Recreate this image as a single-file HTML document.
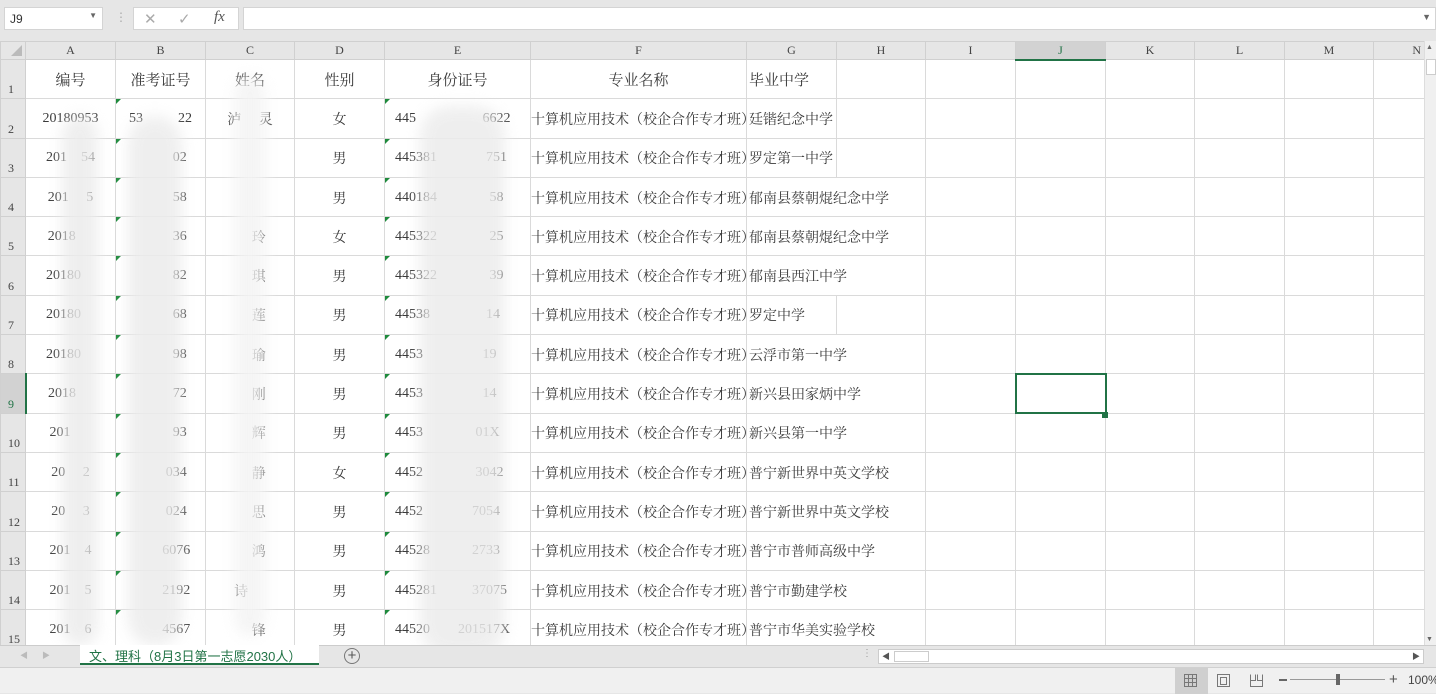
<!DOCTYPE html>
<html><head><meta charset="utf-8"><style>
*{margin:0;padding:0;box-sizing:border-box}
body{width:1436px;height:693px;overflow:hidden;background:#e6e6e6;font-family:"Liberation Serif","Noto Serif CJK SC",serif;position:relative}
.abs{position:absolute}
#grid{position:absolute;left:0;top:41px;width:1424px;height:604px;overflow:hidden;background:#fff}
table{border-collapse:collapse;table-layout:fixed;width:1424px}
td{border:1px solid #dadada;height:39.3px;font-size:14px;color:#3a3a3a;white-space:nowrap;overflow:visible;text-align:center;padding:1px 0 0 0}
tr.hd td{height:18px;background:#e6e6e6;border-color:#d0d0d0;font-size:12px;color:#444;padding:0}
td.rh{background:#e6e6e6;border-color:#d0d0d0;font-size:12px;color:#444;text-align:left;padding-left:7px;vertical-align:bottom;padding-bottom:1px}
td.l{text-align:left;padding-left:2px}
td.ov{border-right:hidden}
td.tri{position:relative}
td.tri::before{content:"";position:absolute;left:0;top:0;border-top:5px solid #1e8a3c;border-right:5px solid transparent}
.blob{position:absolute;background:#ececec;opacity:.85;filter:blur(7px);border-radius:30px}
</style></head><body>
<div class="abs" style="left:4px;top:7px;width:99px;height:23px;background:#fff;border:1px solid #d4d4d4;font:12px 'Liberation Sans',sans-serif;color:#333;padding:4px 5px">J9<span style="position:absolute;right:5px;top:3px;font-size:8px;color:#666">▼</span></div>
<div class="abs" style="left:115px;top:10px;color:#aaa;font-size:12px">⋮</div>
<div class="abs" style="left:133px;top:7px;width:106px;height:23px;background:#fff;border:1px solid #d4d4d4;font:15px 'Liberation Sans',sans-serif;color:#aaa"><span class="abs" style="left:10px;top:2px">✕</span><span class="abs" style="left:44px;top:2px">✓</span><span class="abs" style="left:80px;top:1px;color:#555;font:italic 15px 'Liberation Serif',serif">fx</span></div>
<div class="abs" style="left:243px;top:7px;width:1193px;height:23px;background:#fff;border:1px solid #d4d4d4"><span class="abs" style="right:4px;top:4px;font-size:9px;color:#666">▼</span></div>
<div id="grid"><table>
<colgroup><col style="width:25px"><col style="width:90px"><col style="width:90px"><col style="width:89px"><col style="width:90px"><col style="width:146px"><col style="width:216px"><col style="width:90px"><col style="width:89px"><col style="width:90px"><col style="width:90px"><col style="width:89px"><col style="width:90px"><col style="width:89px"><col style="width:51px"></colgroup>
<tr class="hd"><td style="position:relative"><span style="position:absolute;right:3px;bottom:3px;border-left:11px solid transparent;border-bottom:11px solid #bbb"></span></td><td>A</td><td>B</td><td>C</td><td>D</td><td>E</td><td>F</td><td>G</td><td>H</td><td>I</td><td style="background:#d2d2d2;border-bottom:2px solid #217346;color:#217346">J</td><td>K</td><td>L</td><td>M</td><td style="text-align:right;padding-right:3px">N</td></tr>
<tr><td class="rh" style="height:39px">1</td><td style="font-size:15px">编号</td><td style="font-size:15px">准考证号</td><td style="font-size:15px">姓名</td><td style="font-size:15px">性别</td><td style="font-size:15px">身份证号</td><td style="font-size:15px">专业名称</td><td class="l" style="font-size:15px">毕业中学</td><td></td><td></td><td></td><td></td><td></td><td></td><td></td></tr>
<tr><td class="rh">2</td><td>20180953</td><td class="tri">53&nbsp;&nbsp;&nbsp;&nbsp;&nbsp;&nbsp;&nbsp;&nbsp;&nbsp;&nbsp;22</td><td>泸&nbsp;&nbsp;&nbsp;&nbsp;&nbsp;灵</td><td>女</td><td class="tri l" style="padding-left:10px">445&nbsp;&nbsp;&nbsp;&nbsp;&nbsp;&nbsp;&nbsp;&nbsp;&nbsp;&nbsp;&nbsp;&nbsp;&nbsp;&nbsp;&nbsp;&nbsp;&nbsp;&nbsp;&nbsp;6622</td><td class="l" style="padding-left:0">十算机应用技术（校企合作专才班）</td><td class="l">廷锴纪念中学</td><td></td><td></td><td></td><td></td><td></td><td></td><td></td></tr>
<tr><td class="rh">3</td><td>201&nbsp;&nbsp;&nbsp;&nbsp;54</td><td class="tri">&nbsp;&nbsp;&nbsp;&nbsp;&nbsp;&nbsp;&nbsp;&nbsp;&nbsp;&nbsp;&nbsp;02</td><td></td><td>男</td><td class="tri l" style="padding-left:10px">445381&nbsp;&nbsp;&nbsp;&nbsp;&nbsp;&nbsp;&nbsp;&nbsp;&nbsp;&nbsp;&nbsp;&nbsp;&nbsp;&nbsp;751</td><td class="l" style="padding-left:0">十算机应用技术（校企合作专才班）</td><td class="l">罗定第一中学</td><td></td><td></td><td></td><td></td><td></td><td></td><td></td></tr>
<tr><td class="rh">4</td><td>201&nbsp;&nbsp;&nbsp;&nbsp;&nbsp;5</td><td class="tri">&nbsp;&nbsp;&nbsp;&nbsp;&nbsp;&nbsp;&nbsp;&nbsp;&nbsp;&nbsp;&nbsp;58</td><td></td><td>男</td><td class="tri l" style="padding-left:10px">440184&nbsp;&nbsp;&nbsp;&nbsp;&nbsp;&nbsp;&nbsp;&nbsp;&nbsp;&nbsp;&nbsp;&nbsp;&nbsp;&nbsp;&nbsp;58</td><td class="l" style="padding-left:0">十算机应用技术（校企合作专才班）</td><td class="l ov">郁南县蔡朝焜纪念中学</td><td></td><td></td><td></td><td></td><td></td><td></td><td></td></tr>
<tr><td class="rh">5</td><td>2018&nbsp;&nbsp;&nbsp;&nbsp;&nbsp;</td><td class="tri">&nbsp;&nbsp;&nbsp;&nbsp;&nbsp;&nbsp;&nbsp;&nbsp;&nbsp;&nbsp;&nbsp;36</td><td>&nbsp;&nbsp;&nbsp;&nbsp;&nbsp;玲</td><td>女</td><td class="tri l" style="padding-left:10px">445322&nbsp;&nbsp;&nbsp;&nbsp;&nbsp;&nbsp;&nbsp;&nbsp;&nbsp;&nbsp;&nbsp;&nbsp;&nbsp;&nbsp;&nbsp;25</td><td class="l" style="padding-left:0">十算机应用技术（校企合作专才班）</td><td class="l ov">郁南县蔡朝焜纪念中学</td><td></td><td></td><td></td><td></td><td></td><td></td><td></td></tr>
<tr><td class="rh">6</td><td>20180&nbsp;&nbsp;&nbsp;&nbsp;</td><td class="tri">&nbsp;&nbsp;&nbsp;&nbsp;&nbsp;&nbsp;&nbsp;&nbsp;&nbsp;&nbsp;&nbsp;82</td><td>&nbsp;&nbsp;&nbsp;&nbsp;&nbsp;琪</td><td>男</td><td class="tri l" style="padding-left:10px">445322&nbsp;&nbsp;&nbsp;&nbsp;&nbsp;&nbsp;&nbsp;&nbsp;&nbsp;&nbsp;&nbsp;&nbsp;&nbsp;&nbsp;&nbsp;39</td><td class="l" style="padding-left:0">十算机应用技术（校企合作专才班）</td><td class="l ov">郁南县西江中学</td><td></td><td></td><td></td><td></td><td></td><td></td><td></td></tr>
<tr><td class="rh">7</td><td>20180&nbsp;&nbsp;&nbsp;&nbsp;</td><td class="tri">&nbsp;&nbsp;&nbsp;&nbsp;&nbsp;&nbsp;&nbsp;&nbsp;&nbsp;&nbsp;&nbsp;68</td><td>&nbsp;&nbsp;&nbsp;&nbsp;&nbsp;莲</td><td>男</td><td class="tri l" style="padding-left:10px">44538&nbsp;&nbsp;&nbsp;&nbsp;&nbsp;&nbsp;&nbsp;&nbsp;&nbsp;&nbsp;&nbsp;&nbsp;&nbsp;&nbsp;&nbsp;&nbsp;14</td><td class="l" style="padding-left:0">十算机应用技术（校企合作专才班）</td><td class="l">罗定中学</td><td></td><td></td><td></td><td></td><td></td><td></td><td></td></tr>
<tr><td class="rh">8</td><td>20180&nbsp;&nbsp;&nbsp;&nbsp;</td><td class="tri">&nbsp;&nbsp;&nbsp;&nbsp;&nbsp;&nbsp;&nbsp;&nbsp;&nbsp;&nbsp;&nbsp;98</td><td>&nbsp;&nbsp;&nbsp;&nbsp;&nbsp;瑜</td><td>男</td><td class="tri l" style="padding-left:10px">4453&nbsp;&nbsp;&nbsp;&nbsp;&nbsp;&nbsp;&nbsp;&nbsp;&nbsp;&nbsp;&nbsp;&nbsp;&nbsp;&nbsp;&nbsp;&nbsp;&nbsp;19</td><td class="l" style="padding-left:0">十算机应用技术（校企合作专才班）</td><td class="l ov">云浮市第一中学</td><td></td><td></td><td></td><td></td><td></td><td></td><td></td></tr>
<tr><td class="rh" style="background:#d2d2d2;border-right:2px solid #217346;color:#217346">9</td><td>2018&nbsp;&nbsp;&nbsp;&nbsp;&nbsp;</td><td class="tri">&nbsp;&nbsp;&nbsp;&nbsp;&nbsp;&nbsp;&nbsp;&nbsp;&nbsp;&nbsp;&nbsp;72</td><td>&nbsp;&nbsp;&nbsp;&nbsp;&nbsp;刚</td><td>男</td><td class="tri l" style="padding-left:10px">4453&nbsp;&nbsp;&nbsp;&nbsp;&nbsp;&nbsp;&nbsp;&nbsp;&nbsp;&nbsp;&nbsp;&nbsp;&nbsp;&nbsp;&nbsp;&nbsp;&nbsp;14</td><td class="l" style="padding-left:0">十算机应用技术（校企合作专才班）</td><td class="l ov">新兴县田家炳中学</td><td></td><td></td><td style="border:2px solid #217346"></td><td></td><td></td><td></td><td></td></tr>
<tr><td class="rh">10</td><td>201&nbsp;&nbsp;&nbsp;&nbsp;&nbsp;&nbsp;</td><td class="tri">&nbsp;&nbsp;&nbsp;&nbsp;&nbsp;&nbsp;&nbsp;&nbsp;&nbsp;&nbsp;&nbsp;93</td><td>&nbsp;&nbsp;&nbsp;&nbsp;&nbsp;辉</td><td>男</td><td class="tri l" style="padding-left:10px">4453&nbsp;&nbsp;&nbsp;&nbsp;&nbsp;&nbsp;&nbsp;&nbsp;&nbsp;&nbsp;&nbsp;&nbsp;&nbsp;&nbsp;&nbsp;01X</td><td class="l" style="padding-left:0">十算机应用技术（校企合作专才班）</td><td class="l ov">新兴县第一中学</td><td></td><td></td><td></td><td></td><td></td><td></td><td></td></tr>
<tr><td class="rh">11</td><td>20&nbsp;&nbsp;&nbsp;&nbsp;&nbsp;2</td><td class="tri">&nbsp;&nbsp;&nbsp;&nbsp;&nbsp;&nbsp;&nbsp;&nbsp;&nbsp;034</td><td>&nbsp;&nbsp;&nbsp;&nbsp;&nbsp;静</td><td>女</td><td class="tri l" style="padding-left:10px">4452&nbsp;&nbsp;&nbsp;&nbsp;&nbsp;&nbsp;&nbsp;&nbsp;&nbsp;&nbsp;&nbsp;&nbsp;&nbsp;&nbsp;&nbsp;3042</td><td class="l" style="padding-left:0">十算机应用技术（校企合作专才班）</td><td class="l ov">普宁新世界中英文学校</td><td></td><td></td><td></td><td></td><td></td><td></td><td></td></tr>
<tr><td class="rh">12</td><td>20&nbsp;&nbsp;&nbsp;&nbsp;&nbsp;3</td><td class="tri">&nbsp;&nbsp;&nbsp;&nbsp;&nbsp;&nbsp;&nbsp;&nbsp;&nbsp;024</td><td>&nbsp;&nbsp;&nbsp;&nbsp;&nbsp;思</td><td>男</td><td class="tri l" style="padding-left:10px">4452&nbsp;&nbsp;&nbsp;&nbsp;&nbsp;&nbsp;&nbsp;&nbsp;&nbsp;&nbsp;&nbsp;&nbsp;&nbsp;&nbsp;7054</td><td class="l" style="padding-left:0">十算机应用技术（校企合作专才班）</td><td class="l ov">普宁新世界中英文学校</td><td></td><td></td><td></td><td></td><td></td><td></td><td></td></tr>
<tr><td class="rh">13</td><td>201&nbsp;&nbsp;&nbsp;&nbsp;4</td><td class="tri">&nbsp;&nbsp;&nbsp;&nbsp;&nbsp;&nbsp;&nbsp;&nbsp;&nbsp;6076</td><td>&nbsp;&nbsp;&nbsp;&nbsp;&nbsp;鸿</td><td>男</td><td class="tri l" style="padding-left:10px">44528&nbsp;&nbsp;&nbsp;&nbsp;&nbsp;&nbsp;&nbsp;&nbsp;&nbsp;&nbsp;&nbsp;&nbsp;2733</td><td class="l" style="padding-left:0">十算机应用技术（校企合作专才班）</td><td class="l ov">普宁市普师高级中学</td><td></td><td></td><td></td><td></td><td></td><td></td><td></td></tr>
<tr><td class="rh">14</td><td>201&nbsp;&nbsp;&nbsp;&nbsp;5</td><td class="tri">&nbsp;&nbsp;&nbsp;&nbsp;&nbsp;&nbsp;&nbsp;&nbsp;&nbsp;2192</td><td>诗&nbsp;&nbsp;&nbsp;&nbsp;&nbsp;</td><td>男</td><td class="tri l" style="padding-left:10px">445281&nbsp;&nbsp;&nbsp;&nbsp;&nbsp;&nbsp;&nbsp;&nbsp;&nbsp;&nbsp;37075</td><td class="l" style="padding-left:0">十算机应用技术（校企合作专才班）</td><td class="l ov">普宁市勤建学校</td><td></td><td></td><td></td><td></td><td></td><td></td><td></td></tr>
<tr><td class="rh">15</td><td>201&nbsp;&nbsp;&nbsp;&nbsp;6</td><td class="tri">&nbsp;&nbsp;&nbsp;&nbsp;&nbsp;&nbsp;&nbsp;&nbsp;&nbsp;4567</td><td>&nbsp;&nbsp;&nbsp;&nbsp;&nbsp;锋</td><td>男</td><td class="tri l" style="padding-left:10px">44520&nbsp;&nbsp;&nbsp;&nbsp;&nbsp;&nbsp;&nbsp;&nbsp;201517X</td><td class="l" style="padding-left:0">十算机应用技术（校企合作专才班）</td><td class="l ov">普宁市华美实验学校</td><td></td><td></td><td></td><td></td><td></td><td></td><td></td></tr>
</table>
<div class="blob" style="left:62px;top:75px;width:36px;height:530px"></div>
<div class="blob" style="left:128px;top:75px;width:54px;height:530px"></div>
<div class="blob" style="left:235px;top:35px;width:30px;height:560px;background:#f3f3f3"></div>
<div class="blob" style="left:420px;top:65px;width:85px;height:550px"></div>
<div class="abs" style="left:1102px;top:371px;width:6px;height:6px;background:#217346"></div>
</div>
<div class="abs" style="left:1424px;top:41px;width:12px;height:604px;background:#f0f0f0;border-left:1px solid #ddd">
<div class="abs" style="left:1px;top:2px;font-size:7px;color:#666">▲</div>
<div class="abs" style="left:1px;top:18px;width:10px;height:16px;background:#fff;border:1px solid #ccc"></div>
<div class="abs" style="left:1px;bottom:2px;font-size:7px;color:#666">▼</div></div>
<div class="abs" style="left:0;top:645px;width:1436px;height:22px;background:#e6e6e6;border-top:1px solid #ccc">
<span class="abs" style="left:20px;top:4px;font-size:8px;color:#bbb">◀</span><span class="abs" style="left:42px;top:4px;font-size:8px;color:#bbb">▶</span>
<div class="abs" style="left:80px;top:-1px;width:239px;height:20px;background:#fff;border-bottom:2px solid #217346;color:#217346;font:13px 'Liberation Sans','Noto Sans CJK SC',sans-serif;padding:1px 0 0 9px">文、理科（8月3日第一志愿2030人）</div>
<div class="abs" style="left:344px;top:2px;width:16px;height:16px;border:1px solid #777;border-radius:50%;font:15px/13px 'Liberation Sans',sans-serif;color:#555;text-align:center">+</div>
<span class="abs" style="left:862px;top:2px;color:#999;font-size:10px">⋮</span>
<div class="abs" style="left:878px;top:3px;width:546px;height:15px;background:#fff;border:1px solid #ccc"><span class="abs" style="left:3px;top:1px;font-size:8px;color:#555">◀</span><div class="abs" style="left:15px;top:1px;width:35px;height:11px;border:1px solid #ccc"></div><span class="abs" style="right:3px;top:1px;font-size:8px;color:#555">▶</span></div>
</div>
<div class="abs" style="left:0;top:667px;width:1436px;height:26px;background:#f0f0f0;border-top:1px solid #d0d0d0">
<div class="abs" style="left:1175px;top:0;width:33px;height:26px;background:#cfcfcf"></div>
<svg class="abs" style="left:1183px;top:5px" width="15" height="15" fill="none" stroke="#777"><rect x="1.5" y="1.5" width="12" height="12"/><path d="M5.5 1.5v12M9.5 1.5v12M1.5 5.5h12M1.5 9.5h12"/></svg>
<svg class="abs" style="left:1216px;top:5px" width="15" height="15" fill="none" stroke="#777"><rect x="1.5" y="1.5" width="12" height="12"/><rect x="4.5" y="4.5" width="6" height="7"/></svg>
<svg class="abs" style="left:1249px;top:5px" width="15" height="15" fill="none" stroke="#777"><path d="M1.5 1.5v12h12v-12M1.5 7.5h5v-6M8.5 1.5v6h5"/></svg>
<div class="abs" style="left:1279px;top:11px;width:8px;height:2px;background:#666"></div>
<div class="abs" style="left:1290px;top:11px;width:95px;height:1px;background:#999"></div>
<div class="abs" style="left:1336px;top:6px;width:4px;height:11px;background:#666"></div>
<span class="abs" style="left:1389px;top:3px;font:15px 'Liberation Sans',sans-serif;color:#555">+</span>
<span class="abs" style="left:1408px;top:5px;font:12px 'Liberation Sans',sans-serif;color:#444">100%</span>
</div>
</body></html>
